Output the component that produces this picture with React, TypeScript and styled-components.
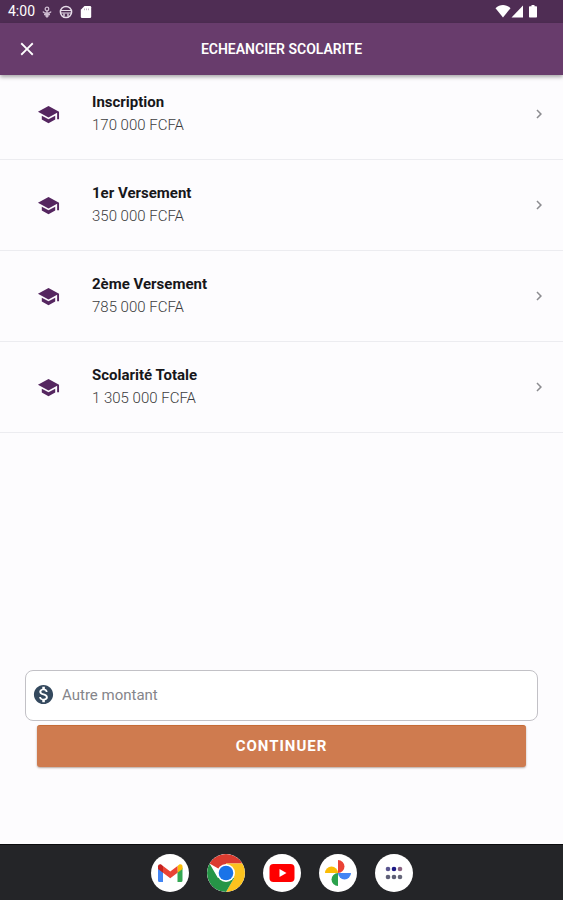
import React from "react";
import styled, { createGlobalStyle } from "styled-components";
import {
  MdChevronRight,
  MdClose,
  MdMonetizationOn,
  MdSchool,
} from "react-icons/md";

const GlobalStyle = createGlobalStyle`
  * { box-sizing: border-box; }
  body {
    margin: 0;
    background: #fdfcfe;
    font-family: Roboto, "Liberation Sans", sans-serif;
  }
  button, input { font-family: inherit; }
`;

const Page = styled.div`
  display: flex;
  flex-direction: column;
  min-height: 100vh;
`;

const StatusBar = styled.div`
  display: flex;
  align-items: center;
  justify-content: space-between;
  height: 23px;
  padding: 0 24px 0 8px;
  background: #4f2d54;
  color: #fff;
  font-size: 14px;
  line-height: 23px;
`;

const StatusGroup = styled.div<{ $gap: number }>`
  display: flex;
  align-items: center;
  gap: ${(p) => p.$gap}px;
`;

const AppBar = styled.header`
  display: grid;
  grid-template-columns: 40px 1fr 40px;
  align-items: center;
  height: 52px;
  padding: 0 7px;
  background: #683c6c;
  color: #fff;
  box-shadow: 0 2px 4px rgba(0, 0, 0, 0.35);
`;

const IconButton = styled.button`
  display: flex;
  align-items: center;
  justify-content: center;
  height: 40px;
  padding: 0;
  border: 0;
  background: none;
  color: inherit;
  cursor: pointer;
`;

const Title = styled.h1`
  margin: 0;
  font-size: 14px;
  font-weight: 600;
  line-height: 20px;
  text-align: center;
`;

const Content = styled.main`
  display: flex;
  flex: 1;
  flex-direction: column;
  justify-content: space-between;
`;

const List = styled.ul`
  margin: 0;
  padding: 0;
  list-style: none;
`;

const Item = styled.li`
  border-bottom: 1px solid #ececf0;
  &:first-child > button {
    padding-top: 16px;
  }
`;

const RowButton = styled.button`
  display: flex;
  align-items: center;
  width: 100%;
  padding: 22px 15px 22px 37px;
  border: 0;
  background: none;
  color: #552660;
  text-align: left;
  cursor: pointer;
`;

const RowText = styled.span`
  display: flex;
  flex: 1;
  flex-direction: column;
  margin-left: 32px;
  font-size: 15px;
  line-height: 23px;
`;

const Label = styled.span`
  color: #17171a;
  font-weight: 700;
`;

const Amount = styled.span`
  color: #3c3c40;
  font-weight: 300;
`;

const Chevron = styled(MdChevronRight)`
  color: #8c8c90;
`;

const Form = styled.form`
  display: flex;
  flex-direction: column;
  gap: 4px;
  padding: 24px 25px 77px;
`;

const Field = styled.label`
  display: flex;
  align-items: center;
  gap: 7px;
  height: 51px;
  padding: 0 6px 2px;
  border: 1px solid #c2c1c6;
  border-radius: 8px;
  background: #fff;
  color: #34495e;
`;

const AmountInput = styled.input`
  flex: 1;
  min-width: 0;
  padding: 0;
  border: 0;
  outline: 0;
  background: none;
  color: #333;
  font-size: 15px;
  line-height: 20px;
  &::placeholder {
    color: #85858a;
    opacity: 1;
  }
`;

const SubmitButton = styled.button`
  height: 42px;
  margin: 0 12px;
  padding: 0 0 2px;
  border: 0;
  border-top: 1px solid #c56b36;
  border-radius: 3px;
  background: #cf7b4f;
  box-shadow: 0 1px 2px rgba(80, 40, 20, 0.4);
  color: #fff;
  font-size: 15px;
  font-weight: 700;
  letter-spacing: 1px;
  cursor: pointer;
`;

const Dock = styled.nav`
  display: flex;
  align-items: center;
  justify-content: center;
  gap: 18px;
  height: 56px;
  border-top: 1px solid #0c0c0e;
  background: #242528;
`;

const DockButton = styled.button`
  width: 38px;
  height: 38px;
  padding: 0;
  border: 0;
  border-radius: 50%;
  background: #fff;
  overflow: hidden;
  cursor: pointer;
  svg {
    display: block;
  }
`;

const MicIcon = () => (
  <svg width="10" height="14" viewBox="0 0 10 14" fill="none" stroke="#cdbbd0" strokeWidth="1.3" aria-hidden="true">
    <circle cx="5" cy="4" r="1.8" />
    <path d="M1 6.500c1 2.200 7 2.200 8 0M2 9.500h6M5 6v5M3.500 10.500 5 12l1.500-1.500" />
  </svg>
);

const FaceIcon = () => (
  <svg width="14" height="14" viewBox="0 0 14 14" fill="none" stroke="#e6dce8" aria-hidden="true">
    <circle cx="7" cy="7" r="5.600" strokeWidth="1.500" />
    <path d="M2 5.500h10M2 8h10" strokeWidth="1" />
    <path d="M5 8.500v3M9 8.500v3" strokeWidth="1.400" />
  </svg>
);

const CardIcon = () => (
  <svg width="12" height="14" viewBox="0 0 12 14" aria-hidden="true">
    <path d="M4.500 1H10a1.200 1.200 0 0 1 1.200 1.200v9.600A1.200 1.200 0 0 1 10 13H2a1.200 1.200 0 0 1-1.200-1.200V4.700z" fill="#fff" />
    <path d="M4.500 3.500v1.700M6.500 3.500v1.700M8.500 3.500v1.700" stroke="#a58da9" strokeWidth="0.700" />
  </svg>
);

const SignalIcons = () => (
  <svg width="44" height="15" viewBox="0 0 44 15" fill="#fff" aria-hidden="true">
    <path d="M0.500 4.200C5-0.200 11-0.200 15.500 4.200L8 13.500z" />
    <path d="M28 1.500v12H16.500z" />
    <path d="M36.500 1h3v1.200h1.800c.4 0 .7.300.7.700v9.900c0 .4-.3.700-.7.700h-6.600c-.4 0-.7-.3-.7-.7V2.900c0-.4.300-.7.700-.7h1.800z" />
  </svg>
);

const GmailIcon = () => (
  <svg width="38" height="38" viewBox="0 0 38 38" aria-hidden="true">
    <path d="M7 13.500 12 17v11H8.500A1.500 1.500 0 0 1 7 26.500z" fill="#4285f4" />
    <path d="M31.500 13.500 26.500 17v11H30a1.500 1.500 0 0 0 1.500-1.500z" fill="#34a853" />
    <path d="M26.500 12 28 10.800c1.500-1.100 3.500-.1 3.500 1.700V15l-5 3.800z" fill="#fbbc04" />
    <path d="M12 12l7.250 5.400L26.500 12v6.800l-7.250 5.400L12 18.800z" fill="#ea4335" />
    <path d="M12 12l-1.500-1.200C9 9.700 7 10.700 7 12.500V15l5 3.800z" fill="#c5221f" />
  </svg>
);

const ChromeIcon = () => (
  <svg width="38" height="38" viewBox="0 0 38 38" aria-hidden="true">
    <path d="M19 19 2.550 9.500A19 19 0 0 1 35.450 9.500H19z" fill="#db3c30" />
    <path d="M19 9.500h16.450A19 19 0 0 1 19 38l8.230-14.250z" fill="#fcc31e" />
    <path d="M2.550 9.500A19 19 0 0 0 19 38l8.230-14.250-16.460 0z" fill="#269547" />
    <circle cx="19" cy="19" r="9" fill="#fff" />
    <circle cx="19" cy="19" r="7.300" fill="#1a73e8" />
  </svg>
);

const YoutubeIcon = () => (
  <svg width="38" height="38" viewBox="0 0 38 38" aria-hidden="true">
    <rect x="6.500" y="10" width="25" height="18" rx="4" fill="#f00" />
    <path d="m16.500 15 7 4-7 4z" fill="#fff" />
  </svg>
);

const PhotosIcon = () => (
  <svg width="38" height="38" viewBox="0 0 38 38" aria-hidden="true">
    <path d="M19 19V6a6.500 6.500 0 0 1 0 13z" fill="#ea4335" />
    <path d="M19 19h13a6.500 6.500 0 0 1-13 0z" fill="#4285f4" />
    <path d="M19 19v13a6.500 6.500 0 0 1 0-13z" fill="#2ba24c" />
    <path d="M19 19H6a6.500 6.500 0 0 1 13 0z" fill="#fbbc04" />
  </svg>
);

const appDots = [
  { x: 13, y: 15, color: "#5a5690" },
  { x: 19, y: 15, color: "#1d1a85" },
  { x: 25, y: 15, color: "#8b6482" },
  { x: 13, y: 23, color: "#5f6078" },
  { x: 19, y: 23, color: "#5d5f74" },
  { x: 25, y: 23, color: "#65677a" },
];

const AppsIcon = () => (
  <svg width="38" height="38" viewBox="0 0 38 38" aria-hidden="true">
    {appDots.map((dot) => (
      <circle key={`${dot.x}-${dot.y}`} cx={dot.x} cy={dot.y} r="2.300" fill={dot.color} />
    ))}
  </svg>
);

const instalments = [
  { label: "Inscription", amount: "170 000 FCFA" },
  { label: "1er Versement", amount: "350 000 FCFA" },
  { label: "2ème Versement", amount: "785 000 FCFA" },
  { label: "Scolarité Totale", amount: "1 305 000 FCFA" },
];

const dockApps = [
  { name: "Gmail", Icon: GmailIcon },
  { name: "Chrome", Icon: ChromeIcon },
  { name: "YouTube", Icon: YoutubeIcon },
  { name: "Photos", Icon: PhotosIcon },
  { name: "Applications", Icon: AppsIcon },
];

export default function App() {
  return (
    <Page>
      <GlobalStyle />
      <StatusBar>
        <StatusGroup $gap={7}>
          <span>4:00</span>
          <MicIcon />
          <FaceIcon />
          <CardIcon />
        </StatusGroup>
        <SignalIcons />
      </StatusBar>
      <AppBar>
        <IconButton type="button" aria-label="Fermer">
          <MdClose size={22} />
        </IconButton>
        <Title>ECHEANCIER SCOLARITE</Title>
      </AppBar>
      <Content>
        <List>
          {instalments.map((item) => (
            <Item key={item.label}>
              <RowButton type="button">
                <MdSchool size={23} />
                <RowText>
                  <Label>{item.label}</Label>
                  <Amount>{item.amount}</Amount>
                </RowText>
                <Chevron size={18} />
              </RowButton>
            </Item>
          ))}
        </List>
        <Form onSubmit={(event) => event.preventDefault()}>
          <Field>
            <MdMonetizationOn size={23} />
            <AmountInput
              type="text"
              inputMode="numeric"
              placeholder="Autre montant"
              aria-label="Autre montant"
            />
          </Field>
          <SubmitButton type="submit">CONTINUER</SubmitButton>
        </Form>
      </Content>
      <Dock aria-label="Applications">
        {dockApps.map(({ name, Icon }) => (
          <DockButton key={name} type="button" aria-label={name}>
            <Icon />
          </DockButton>
        ))}
      </Dock>
    </Page>
  );
}
